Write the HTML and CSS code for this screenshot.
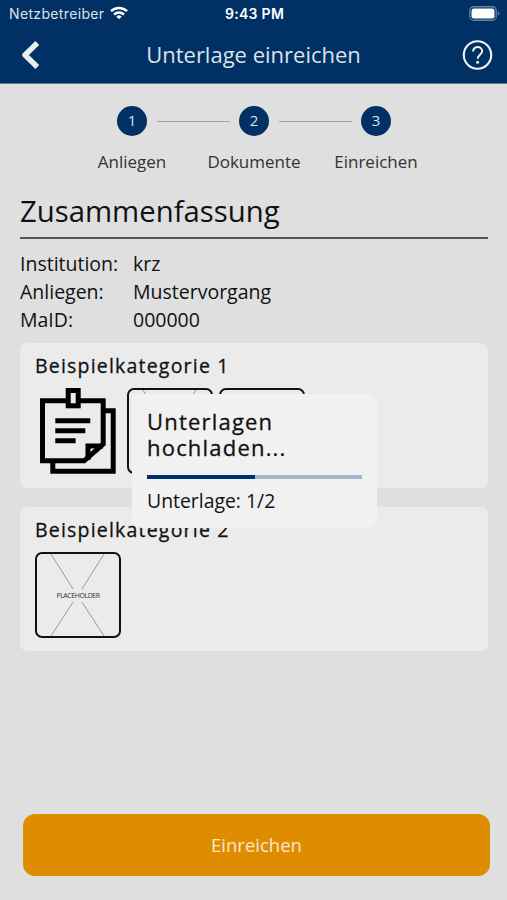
FILE: index.html
```html
<!DOCTYPE html>
<html lang="de">
<head>
    <meta charset="UTF-8">
    <meta name="viewport" content="width=device-width, initial-scale=1.0">
    <title>Unterlage einreichen</title>
    <link rel="stylesheet" href="styles.css">
</head>
<body>
    <header>
        <div class="status-bar">
            <div class="carrier">
                <span>Netzbetreiber</span>
                <svg width="18" height="16" viewBox="0 -1 18 16" fill="none" stroke="#fff" stroke-width="2.5">
                    <path d="M1 5.2a11.5 11.5 0 0 1 16 0"/>
                    <path d="M4 8.6a7.2 7.2 0 0 1 10 0"/>
                    <path d="M9 13.2L6.3 10.6a3.9 3.9 0 0 1 5.4 0z" fill="#fff" stroke="none"/>
                </svg>
            </div>
            <div class="time">9:43 PM</div>
            <svg class="battery" width="31" height="15" viewBox="0 0 31 15">
                <rect x="0.75" y="0.75" width="26.5" height="13.5" rx="4" fill="none" stroke="#6683a5" stroke-width="1.3"/>
                <rect x="2.5" y="2.5" width="23" height="10" rx="2.2" fill="#fff"/>
                <path d="M28.8 5.3q1.6 .8 1.6 2.2t-1.6 2.2z" fill="#6683a5"/>
            </svg>
        </div>
        <div class="title-bar">
            <svg width="20" height="30" viewBox="0 0 20 30" fill="none" stroke="#ececec" stroke-width="5.4" stroke-linejoin="round">
                <path d="M17.3 3L5 15l12.3 12"/>
            </svg>
            <h1>Unterlage einreichen</h1>
            <svg width="32" height="32" viewBox="0 0 32 32" fill="none" stroke="#f2f2f2">
                <circle cx="16.5" cy="16" r="13.7" stroke-width="2.1"/>
                <path d="M12.1 12.4c0-2.6 1.9-4.4 4.5-4.4s4.5 1.8 4.5 4.2c0 3.5-4.5 3.6-4.5 7.6" stroke-width="2"/>
                <circle cx="16.6" cy="23.2" r="1.5" fill="#f2f2f2" stroke="none"/>
            </svg>
        </div>
    </header>

    <main>
        <ol class="steps">
            <li><span class="step-number">1</span>Anliegen</li>
            <li><span class="step-number">2</span>Dokumente</li>
            <li><span class="step-number">3</span>Einreichen</li>
        </ol>

        <h2>Zusammenfassung</h2>

        <dl class="info">
            <dt>Institution:</dt><dd>krz</dd>
            <dt>Anliegen:</dt><dd>Mustervorgang</dd>
            <dt>MaID:</dt><dd>000000</dd>
        </dl>

        <section class="category">
            <h3>Beispielkategorie 1</h3>
            <div class="files">
                <svg width="86" height="86" viewBox="0 0 86 86" fill="none" stroke="#000" stroke-width="5">
                    <path d="M70 22.8h8.2v60.4H17.8V74"/>
                    <path d="M33 12.8H7.5v60h41.7L68.2 56V12.8H43"/>
                    <path d="M53 72V58H68"/>
                    <rect x="33.2" y="2.5" width="10" height="15.3"/>
                    <path d="M20.3 32.8h35M20.3 42.8h30M20.3 52.8h20.3"/>
                </svg>
                <div class="placeholder">
                    <svg width="82" height="82" viewBox="0 0 82 82" stroke="#999" stroke-width="1">
                        <path d="M14 0l22 35M67 0L45 35M14 82l22-34M67 82L45 48"/>
                    </svg>
                </div>
                <div class="placeholder"></div>
            </div>
        </section>

        <section class="category">
            <h3>Beispielkategorie 2</h3>
            <div class="files">
                <div class="placeholder">
                    <svg width="82" height="82" viewBox="0 0 82 82" stroke="#999" stroke-width="1">
                        <path d="M14 0l22 35M67 0L45 35M14 82l22-34M67 82L45 48"/>
                    </svg>
                    <span>PLACEHOLDER</span>
                </div>
            </div>
        </section>

        <button>Einreichen</button>
    </main>

    <div class="dialog">
        <h4>Unterlagen hochladen...</h4>
        <div class="progress"><div class="bar" style="width: 50%"></div></div>
        <p>Unterlage: 1/2</p>
    </div>
</body>
</html>
```

FILE: styles.css
```css
* {
    box-sizing: border-box;
}

body {
    font-family: "Open Sans", sans-serif;
    margin: 0;
    height: 900px;
    display: flex;
    flex-direction: column;
    background: #dfdfdf;
    color: #111;
}

h1, h2, h3, h4, p, ol, dl, dd {
    margin: 0;
    padding: 0;
    font-weight: normal;
}

svg {
    display: block;
}

header {
    height: 84px;
    background: #003064;
    color: white;
    border-bottom: 1px solid #5f7b9c;
}

.status-bar {
    display: grid;
    grid-template-columns: 1fr auto 1fr;
    align-items: center;
    height: 27px;
    padding: 0 7px 0 9px;
    font-family: Inter, sans-serif;
    font-size: 14px;
}

.carrier {
    display: flex;
    gap: 6px;
    color: #dce3ea;
    letter-spacing: 0.35px;
}

.time {
    font-weight: 600;
    letter-spacing: 0.3px;
}

.battery {
    justify-self: end;
}

.title-bar {
    display: flex;
    justify-content: space-between;
    align-items: center;
    height: 56px;
    padding: 0 14px 0 20px;
}

h1 {
    padding: 0 0 2px 6px;
    font-size: 22px;
    line-height: 30px;
    color: #dbe2ea;
}

main {
    flex: 1;
    display: flex;
    flex-direction: column;
    padding: 22px 19px 24px 20px;
}

.steps {
    display: flex;
    justify-content: center;
    list-style: none;
    font-size: 17px;
    line-height: 24px;
    color: #333;
}

.steps li {
    position: relative;
    width: 122px;
    display: flex;
    flex-direction: column;
    align-items: center;
    gap: 14px;
}

/* line between two steps */
.steps li + li::before {
    content: "";
    position: absolute;
    top: 15px;
    left: -36px;
    width: 73px;
    height: 1px;
    background: #a5a5a5;
}

.step-number {
    width: 30px;
    height: 30px;
    line-height: 29px;
    border-radius: 50%;
    background: #003064;
    color: #dbe2ea;
    font-size: 15px;
    text-align: center;
}

h2 {
    margin-top: 14px;
    height: 51px;
    font-size: 29.3px;
    line-height: 46px;
    border-bottom: 2px solid #555;
}

.info {
    display: grid;
    grid-template-columns: 113px 1fr;
    margin-top: 11px;
    font-size: 19.5px;
    line-height: 28px;
}

.category {
    height: 145px;
    margin-top: 9px;
    padding: 8px 15px;
    border-radius: 7px;
    background: #ebebeb;
}

.category + .category {
    height: 144px;
    margin-top: 19px;
    padding-top: 8px;
}

h3 {
    font-size: 19.5px;
    line-height: 30px;
    letter-spacing: 1.2px;
    -webkit-text-stroke: 0.3px #111;
}

.files {
    display: flex;
    gap: 6px;
    margin-top: 7px;
}

.placeholder {
    position: relative;
    display: flex;
    align-items: center;
    justify-content: center;
    width: 86px;
    height: 86px;
    border: 2px solid #111;
    border-radius: 7px;
}

.placeholder span {
    position: absolute;
    font-size: 7px;
    letter-spacing: -0.45px;
    color: #333;
}

button {
    margin: auto 0 0 3px;
    width: 467px;
    height: 62px;
    padding-bottom: 3px;
    border: none;
    border-radius: 12px;
    background: #de8c00;
    color: #fbe8cb;
    font-family: inherit;
    font-size: 18.5px;
}

.dialog {
    position: absolute;
    top: 394px;
    left: 132px;
    width: 245px;
    height: 134px;
    padding: 14px 15px 0;
    border-radius: 9px;
    background: #f1f1f1;
}

h4 {
    font-size: 22px;
    line-height: 26px;
    letter-spacing: 1.2px;
    -webkit-text-stroke: 0.3px #111;
}

.progress {
    height: 4px;
    margin-top: 15px;
    background: #a5b4cc;
}

.bar {
    height: 100%;
    background: #003070;
}

.dialog p {
    margin-top: 8px;
    font-size: 19.4px;
    line-height: 28px;
}
```
